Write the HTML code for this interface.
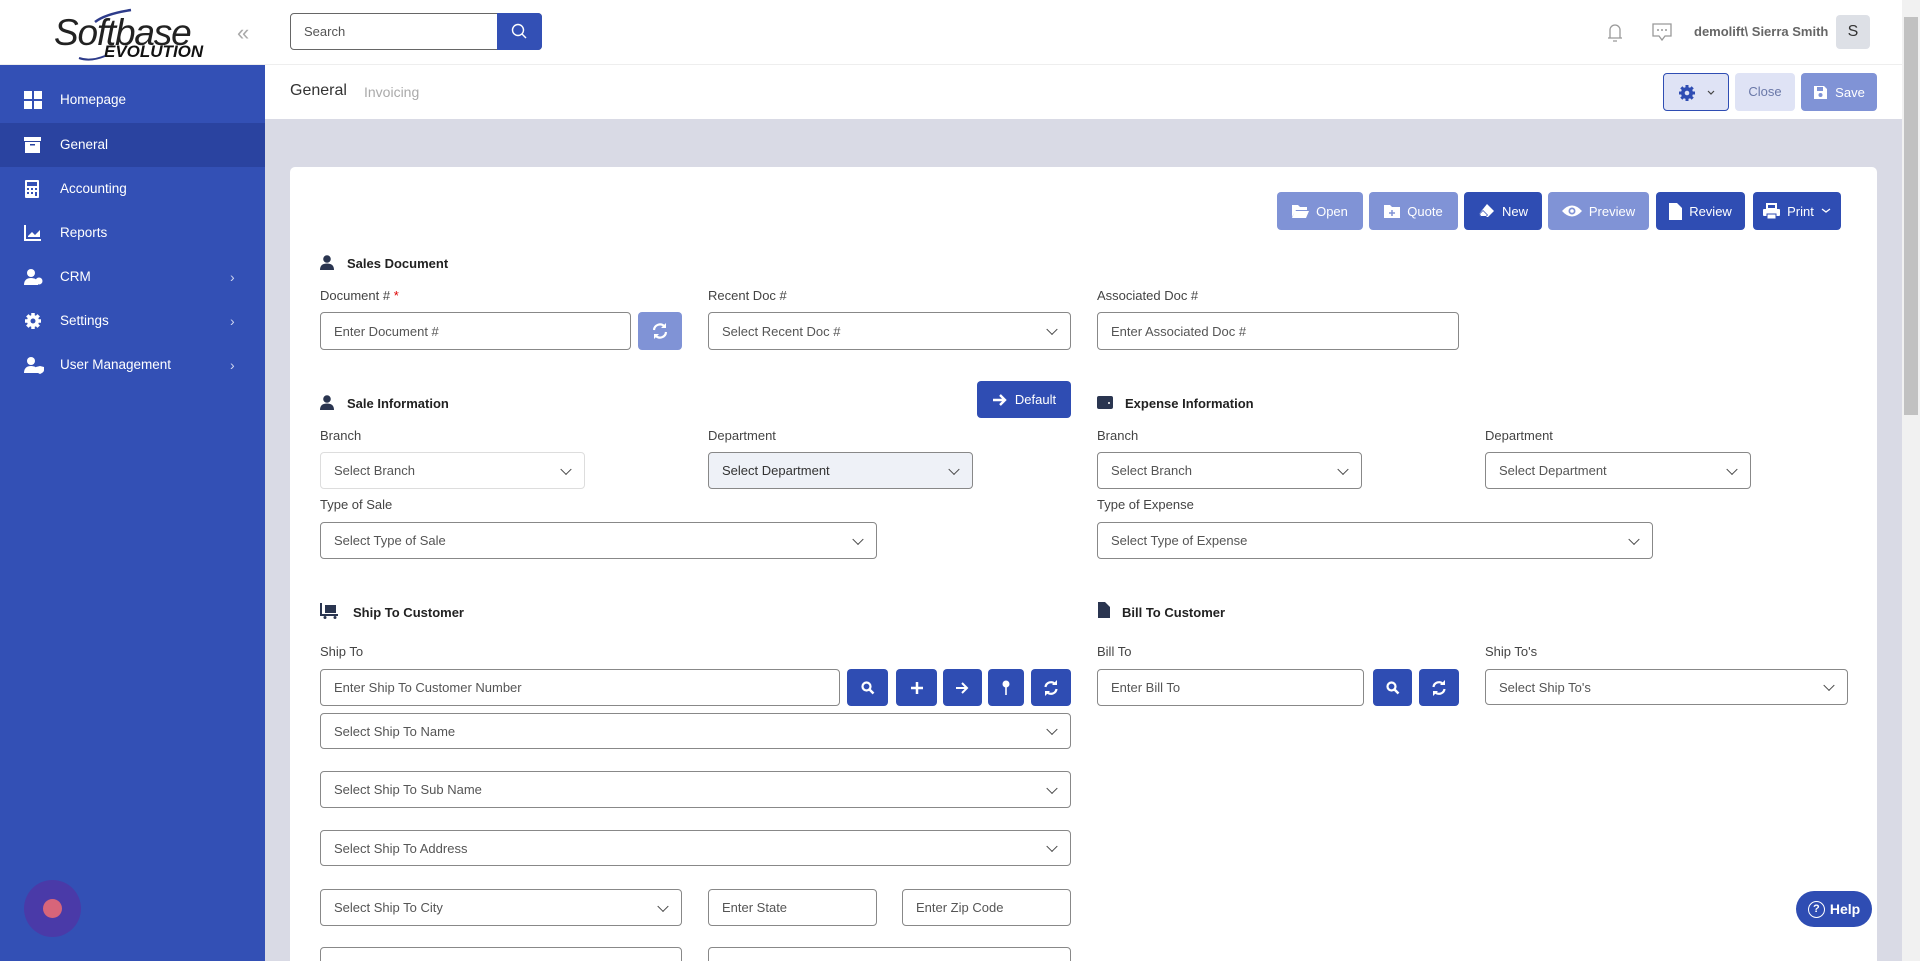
<!DOCTYPE html>
<html style="width:1920px;height:961px;overflow:hidden"><head><meta charset="utf-8"><style>
*{box-sizing:border-box;margin:0;padding:0}
body{width:1920px;height:961px;overflow:hidden;background:#d9dae5;font-family:"Liberation Sans",sans-serif;color:#333}
#w{position:relative;width:1920px;height:961px;overflow:hidden}
.a{position:absolute}
.sb{left:0;top:65px;width:265px;height:896px;background:#3350b5}
.item{position:absolute;left:0;width:265px;height:44px;color:#fff;font-size:13.5px;line-height:44px;padding-left:60px}
.item svg{position:absolute;left:24px;top:13px}
.item .ch{position:absolute;left:230px;top:0;font-size:14px;color:#cfd6f0}
.lbl{position:absolute;font-size:13px;color:#444}
.in{position:absolute;border:1px solid #888;border-radius:4px;background:#fff;font-size:13px;color:#555;padding-left:13px;display:flex;align-items:center}
.sel::after{content:"";position:absolute;right:14px;top:50%;width:7px;height:7px;border-right:1.5px solid #444;border-bottom:1.5px solid #444;transform:translateY(-70%) rotate(45deg)}
.h{position:absolute;font-size:13px;font-weight:bold;color:#222}
.btn{position:absolute;border-radius:4px;color:#fff;font-size:13px;display:flex;align-items:center;justify-content:center;gap:7px;background:#2f4db3}
.lt{background:#8093d6}
.ib{position:absolute;border-radius:4px;background:#2f4db3;display:flex;align-items:center;justify-content:center;color:#fff;font-weight:bold;font-size:15px}
</style></head><body><div id="w">
<!-- top bar -->
<div class="a" style="left:0;top:0;width:1902px;height:65px;background:#fff;border-bottom:1px solid #eee"></div>
<div class="a" style="left:265px;top:65px;width:1637px;height:54px;background:#fff"></div>
<!-- logo -->
<div class="a" style="left:54px;top:13px;font-size:37px;font-style:italic;color:#222;letter-spacing:-1.2px;font-family:'Liberation Sans',sans-serif;line-height:40px">Softbase</div>
<div class="a" style="left:104px;top:43px;font-size:17px;font-style:italic;font-weight:bold;color:#111;line-height:18px">EVOLUTION</div>
<svg class="a" style="left:65px;top:6px" width="80" height="56"><path d="M66 4 Q40 8 30 16" stroke="#2d3b8a" stroke-width="2.5" fill="none"/><path d="M40 50 Q25 56 14 52" stroke="#2d3b8a" stroke-width="2" fill="none"/></svg>
<div class="a" style="left:237px;top:20px;font-size:22px;color:#aaa">«</div>
<!-- search -->
<div class="a" style="left:290px;top:13px;width:252px;height:37px;border:1px solid #666;border-radius:4px;background:#fff;font-size:13px;color:#555;padding:10px 13px">Search</div>
<div class="a" style="left:497px;top:13px;width:45px;height:37px;background:#3350b5;border-radius:0 4px 4px 0"><svg width="45" height="37"><circle cx="21" cy="17" r="5.5" stroke="#fff" stroke-width="1.4" fill="none"/><path d="M25 21l4 4" stroke="#fff" stroke-width="1.4"/></svg></div>
<!-- header right -->
<svg class="a" style="left:1604px;top:20px" width="22" height="24"><path d="M4 18h14M6 18V10a5 5 0 0110 0v8M9 21h4" stroke="#999" stroke-width="1.3" fill="none"/></svg>
<svg class="a" style="left:1651px;top:21px" width="22" height="22"><path d="M2 3h18v12h-6l-3 4-3-4H2z" stroke="#999" stroke-width="1.3" fill="none"/><circle cx="7" cy="9" r="1" fill="#999"/><circle cx="11" cy="9" r="1" fill="#999"/><circle cx="15" cy="9" r="1" fill="#999"/></svg>
<div class="a" style="left:1694px;top:24px;font-size:13px;font-weight:bold;color:#666">demolift\ Sierra Smith</div>
<div class="a" style="left:1836px;top:15px;width:34px;height:34px;background:#dde0e6;border-radius:4px;font-size:16px;color:#333;text-align:center;line-height:34px">S</div>
<!-- second bar -->
<div class="a" style="left:290px;top:82px;font-size:16px;color:#333">General</div>
<div class="a" style="left:364px;top:84px;font-size:14px;color:#aaa">Invoicing</div>
<div class="a" style="left:1663px;top:73px;width:66px;height:38px;border:1.5px solid #2f4db3;border-radius:4px;background:#dfe3f5"><svg width="66" height="38"><circle cx="23" cy="19" r="6" fill="#2f4db3"/><path d="M23 11v16M15 19h16M17.3 13.3l11.4 11.4M28.7 13.3L17.3 24.7" stroke="#2f4db3" stroke-width="3"/><circle cx="23" cy="19" r="2.3" fill="#dfe3f5"/><path d="M44 17l3 3 3-3" stroke="#444" stroke-width="1.2" fill="none"/></svg></div>
<div class="a" style="left:1735px;top:73px;width:60px;height:38px;background:#dfe3f5;border-radius:4px;font-size:13px;color:#6a78a8;text-align:center;line-height:38px">Close</div>
<div class="btn lt" style="left:1801px;top:73px;width:76px;height:38px"><svg width="15" height="15"><path d="M1 1h10l3 3v10H1z" fill="#fff"/><rect x="4" y="2" width="6" height="4" fill="#8093d6"/><circle cx="7.5" cy="10" r="2" fill="#8093d6"/></svg>Save</div>
<!-- sidebar -->
<div class="a sb"></div>
<div class="item" style="top:78px"><svg width="18" height="18"><rect x="0" y="0" width="8" height="8" fill="#fff"/><rect x="10" y="0" width="8" height="8" fill="#fff"/><rect x="0" y="10" width="8" height="8" fill="#fff"/><rect x="10" y="10" width="8" height="8" fill="#fff"/></svg>Homepage</div>
<div class="item" style="top:123px;background:#2a43a0"><svg width="18" height="18"><rect x="0" y="1" width="17" height="4" fill="#fff"/><rect x="1" y="6" width="15" height="11" fill="#fff"/><rect x="6" y="8" width="5" height="1.5" fill="#2a43a0"/></svg>General</div>
<div class="item" style="top:167px"><svg width="18" height="18"><rect x="1" y="0" width="14" height="18" rx="1" fill="#fff"/><rect x="3" y="2" width="10" height="4" fill="#3350b5"/><g fill="#3350b5"><rect x="3" y="8" width="2" height="2"/><rect x="7" y="8" width="2" height="2"/><rect x="11" y="8" width="2" height="2"/><rect x="3" y="12" width="2" height="2"/><rect x="7" y="12" width="2" height="2"/><rect x="11" y="12" width="2" height="4"/></g></svg>Accounting</div>
<div class="item" style="top:211px"><svg width="18" height="18"><path d="M1 1v15h16" stroke="#fff" stroke-width="2" fill="none"/><path d="M4 12l4-4 3 3 5-5v7H4z" fill="#fff"/></svg>Reports</div>
<div class="item" style="top:255px"><svg width="20" height="18"><circle cx="7" cy="5" r="4" fill="#fff"/><path d="M0 17c0-5 3-7 7-7s6 2 7 3v4z" fill="#fff"/><circle cx="15" cy="13" r="3.5" fill="#fff"/></svg>CRM<span class="ch">›</span></div>
<div class="item" style="top:299px"><svg width="18" height="18"><circle cx="9" cy="9" r="6" fill="#fff"/><path d="M9 1v16M1 9h16M3.3 3.3l11.4 11.4M14.7 3.3L3.3 14.7" stroke="#fff" stroke-width="3.5"/><circle cx="9" cy="9" r="2.5" fill="#3350b5"/></svg>Settings<span class="ch">›</span></div>
<div class="item" style="top:343px"><svg width="20" height="18"><circle cx="7" cy="5" r="4" fill="#fff"/><path d="M0 17c0-5 3-7 7-7s6 2 7 3v4z" fill="#fff"/><path d="M12 11l4-1 4 1v3c0 2-2 3-4 4-2-1-4-2-4-4z" fill="#fff"/></svg>User Management<span class="ch">›</span></div>
<div class="a" style="left:24px;top:880px;width:57px;height:57px;border-radius:50%;background:#4a3aa8"></div>
<div class="a" style="left:43px;top:899px;width:19px;height:19px;border-radius:50%;background:#d7657a"></div>
<!-- card -->
<div class="a" style="left:290px;top:167px;width:1587px;height:794px;background:#fff;border-radius:5px 5px 0 0"></div>
<div class="btn lt" style="left:1277px;top:192px;width:86px;height:38px"><svg width="17" height="14"><path d="M0 1h6l2 2h7v3H4L0 13z" fill="#fff"/><path d="M3 7h14l-3 7H0z" fill="#fff"/></svg>Open</div>
<div class="btn lt" style="left:1369px;top:192px;width:89px;height:38px"><svg width="16" height="14"><path d="M0 1h6l2 2h8v11H0z" fill="#fff"/><path d="M8 6v6M5 9h6" stroke="#8093d6" stroke-width="1.5"/></svg>Quote</div>
<div class="btn" style="left:1464px;top:192px;width:78px;height:38px"><svg width="17" height="16"><path d="M9 1l7 7-6 6H3l-2-3z" fill="#fff"/><path d="M1 11l4-4 5 5-2 2H3z" fill="#2f4db3"/><path d="M2 11l3-3 4 4-1 1H3z" fill="#fff"/></svg>New</div>
<div class="btn lt" style="left:1548px;top:192px;width:101px;height:38px"><svg width="20" height="14"><path d="M0 7Q10-4 20 7Q10 18 0 7z" fill="#fff"/><circle cx="10" cy="7" r="3.5" fill="#8093d6"/><circle cx="10" cy="7" r="1.8" fill="#fff"/></svg>Preview</div>
<div class="btn" style="left:1656px;top:192px;width:89px;height:38px"><svg width="13" height="17"><path d="M0 0h8l5 5v12H0z" fill="#fff"/></svg>Review</div>
<div class="btn" style="left:1753px;top:192px;width:88px;height:38px"><svg width="17" height="17"><rect x="4" y="1" width="9" height="5" fill="none" stroke="#fff" stroke-width="2"/><rect x="0" y="6" width="17" height="7" rx="1" fill="#fff"/><rect x="4" y="11" width="9" height="5" fill="#fff" stroke="#2f4db3" stroke-width="1"/></svg>Print <svg width="10" height="8"><path d="M1 2l4 3 4-3" stroke="#fff" stroke-width="1.3" fill="none"/></svg></div>

<!-- Sales Document -->
<svg class="a" style="left:320px;top:255px" width="14" height="15"><circle cx="7" cy="4" r="3.8" fill="#2a3550"/><path d="M0 15c0-5 3-6.5 7-6.5s7 1.5 7 6.5z" fill="#2a3550"/></svg>
<div class="h" style="left:347px;top:256px">Sales Document</div>
<div class="lbl" style="left:320px;top:288px">Document # <span style="color:#d00">*</span></div>
<div class="in" style="left:320px;top:312px;width:311px;height:38px">Enter Document #</div>
<div class="ib" style="left:638px;top:312px;width:44px;height:38px;background:#8093d6"><svg width="18" height="18"><path d="M3 8a6 6 0 0110.5-3.5M15 10a6 6 0 01-10.5 3.5" stroke="#fff" stroke-width="2.2" fill="none"/><path d="M15 1v5h-5zM3 17v-5h5z" fill="#fff"/></svg></div>
<div class="lbl" style="left:708px;top:288px">Recent Doc #</div>
<div class="in sel" style="left:708px;top:312px;width:363px;height:38px">Select Recent Doc #</div>
<div class="lbl" style="left:1097px;top:288px">Associated Doc #</div>
<div class="in" style="left:1097px;top:312px;width:362px;height:38px">Enter Associated Doc #</div>

<!-- Sale information -->
<svg class="a" style="left:320px;top:395px" width="14" height="15"><circle cx="7" cy="4" r="3.8" fill="#2a3550"/><path d="M0 15c0-5 3-6.5 7-6.5s7 1.5 7 6.5z" fill="#2a3550"/></svg>
<div class="h" style="left:347px;top:396px">Sale Information</div>
<div class="btn" style="left:977px;top:381px;width:94px;height:37px"><svg width="16" height="14"><path d="M1 7h12M8 2l5 5-5 5" stroke="#fff" stroke-width="2.4" fill="none"/></svg>Default</div>
<svg class="a" style="left:1097px;top:395px" width="16" height="14"><rect x="0" y="1" width="16" height="13" rx="2" fill="#2a3550"/><circle cx="12" cy="8" r="1" fill="#fff"/></svg>
<div class="h" style="left:1125px;top:396px">Expense Information</div>
<div class="lbl" style="left:320px;top:428px">Branch</div>
<div class="in sel" style="left:320px;top:452px;width:265px;height:37px;border-color:#ddd">Select Branch</div>
<div class="lbl" style="left:708px;top:428px">Department</div>
<div class="in sel" style="left:708px;top:452px;width:265px;height:37px;background:#eef1f7;color:#333">Select Department</div>
<div class="lbl" style="left:1097px;top:428px">Branch</div>
<div class="in sel" style="left:1097px;top:452px;width:265px;height:37px">Select Branch</div>
<div class="lbl" style="left:1485px;top:428px">Department</div>
<div class="in sel" style="left:1485px;top:452px;width:266px;height:37px">Select Department</div>
<div class="lbl" style="left:320px;top:497px">Type of Sale</div>
<div class="in sel" style="left:320px;top:522px;width:557px;height:37px">Select Type of Sale</div>
<div class="lbl" style="left:1097px;top:497px">Type of Expense</div>
<div class="in sel" style="left:1097px;top:522px;width:556px;height:37px">Select Type of Expense</div>

<!-- Ship to -->
<svg class="a" style="left:320px;top:603px" width="19" height="16"><path d="M1 0v12h17" stroke="#2a3550" stroke-width="2" fill="none"/><rect x="5" y="2" width="11" height="8" fill="#2a3550"/><circle cx="5" cy="14.5" r="1.5" fill="#2a3550"/><circle cx="15" cy="14.5" r="1.5" fill="#2a3550"/></svg>
<div class="h" style="left:353px;top:605px">Ship To Customer</div>
<svg class="a" style="left:1098px;top:602px" width="12" height="16"><path d="M0 0h7l5 5v11H0z" fill="#2a3550"/></svg>
<div class="h" style="left:1122px;top:605px">Bill To Customer</div>
<div class="lbl" style="left:320px;top:644px">Ship To</div>
<div class="in" style="left:320px;top:669px;width:520px;height:37px">Enter Ship To Customer Number</div>
<div class="ib" style="left:847px;top:669px;width:41px;height:37px"><svg width="14" height="14"><circle cx="5.5" cy="5.5" r="4" stroke="#fff" stroke-width="2.2" fill="none"/><path d="M8.5 8.5l4 4" stroke="#fff" stroke-width="2.5"/></svg></div>
<div class="ib" style="left:896px;top:669px;width:41px;height:37px"><svg width="12" height="12"><path d="M6 0v12M0 6h12" stroke="#fff" stroke-width="2.5"/></svg></div>
<div class="ib" style="left:943px;top:669px;width:39px;height:37px"><svg width="13" height="12"><path d="M0 6h11M6 1l5 5-5 5" stroke="#fff" stroke-width="2" fill="none"/></svg></div>
<div class="ib" style="left:988px;top:669px;width:36px;height:37px"><svg width="8" height="15"><circle cx="4" cy="4" r="3.5" fill="#fff"/><path d="M4 6v9" stroke="#fff" stroke-width="1.6"/></svg></div>
<div class="ib" style="left:1031px;top:669px;width:40px;height:37px"><svg width="16" height="16"><path d="M2.5 7a5.5 5.5 0 019.5-3M13.5 9a5.5 5.5 0 01-9.5 3" stroke="#fff" stroke-width="2.2" fill="none"/><path d="M14 0v5h-5zM2 16v-5h5z" fill="#fff"/></svg></div>
<div class="lbl" style="left:1097px;top:644px">Bill To</div>
<div class="in" style="left:1097px;top:669px;width:267px;height:37px">Enter Bill To</div>
<div class="ib" style="left:1373px;top:669px;width:39px;height:37px"><svg width="14" height="14"><circle cx="5.5" cy="5.5" r="4" stroke="#fff" stroke-width="2.2" fill="none"/><path d="M8.5 8.5l4 4" stroke="#fff" stroke-width="2.5"/></svg></div>
<div class="ib" style="left:1419px;top:669px;width:40px;height:37px"><svg width="16" height="16"><path d="M2.5 7a5.5 5.5 0 019.5-3M13.5 9a5.5 5.5 0 01-9.5 3" stroke="#fff" stroke-width="2.2" fill="none"/><path d="M14 0v5h-5zM2 16v-5h5z" fill="#fff"/></svg></div>
<div class="lbl" style="left:1485px;top:644px">Ship To's</div>
<div class="in sel" style="left:1485px;top:669px;width:363px;height:36px">Select Ship To's</div>
<div class="in sel" style="left:320px;top:713px;width:751px;height:36px">Select Ship To Name</div>
<div class="in sel" style="left:320px;top:771px;width:751px;height:37px">Select Ship To Sub Name</div>
<div class="in sel" style="left:320px;top:830px;width:751px;height:36px">Select Ship To Address</div>
<div class="in sel" style="left:320px;top:889px;width:362px;height:37px">Select Ship To City</div>
<div class="in" style="left:708px;top:889px;width:169px;height:37px">Enter State</div>
<div class="in" style="left:902px;top:889px;width:169px;height:37px">Enter Zip Code</div>
<div class="in" style="left:320px;top:947px;width:362px;height:37px"></div>
<div class="in" style="left:708px;top:947px;width:363px;height:37px"></div>
<!-- help -->
<div class="a" style="left:1796px;top:891px;width:76px;height:36px;border-radius:18px;background:#2f4db3;color:#fff;font-size:14px;font-weight:bold;display:flex;align-items:center;justify-content:center;gap:5px"><span style="display:inline-block;width:17px;height:17px;border:1.5px solid #fff;border-radius:50%;font-size:11px;line-height:14px;text-align:center">?</span>Help</div>
<!-- scrollbar -->
<div class="a" style="left:1902px;top:0;width:18px;height:961px;background:#f1f1f1"></div>
<div class="a" style="left:1904px;top:17px;width:14px;height:398px;background:#c1c1c1"></div>
</div></body></html>
